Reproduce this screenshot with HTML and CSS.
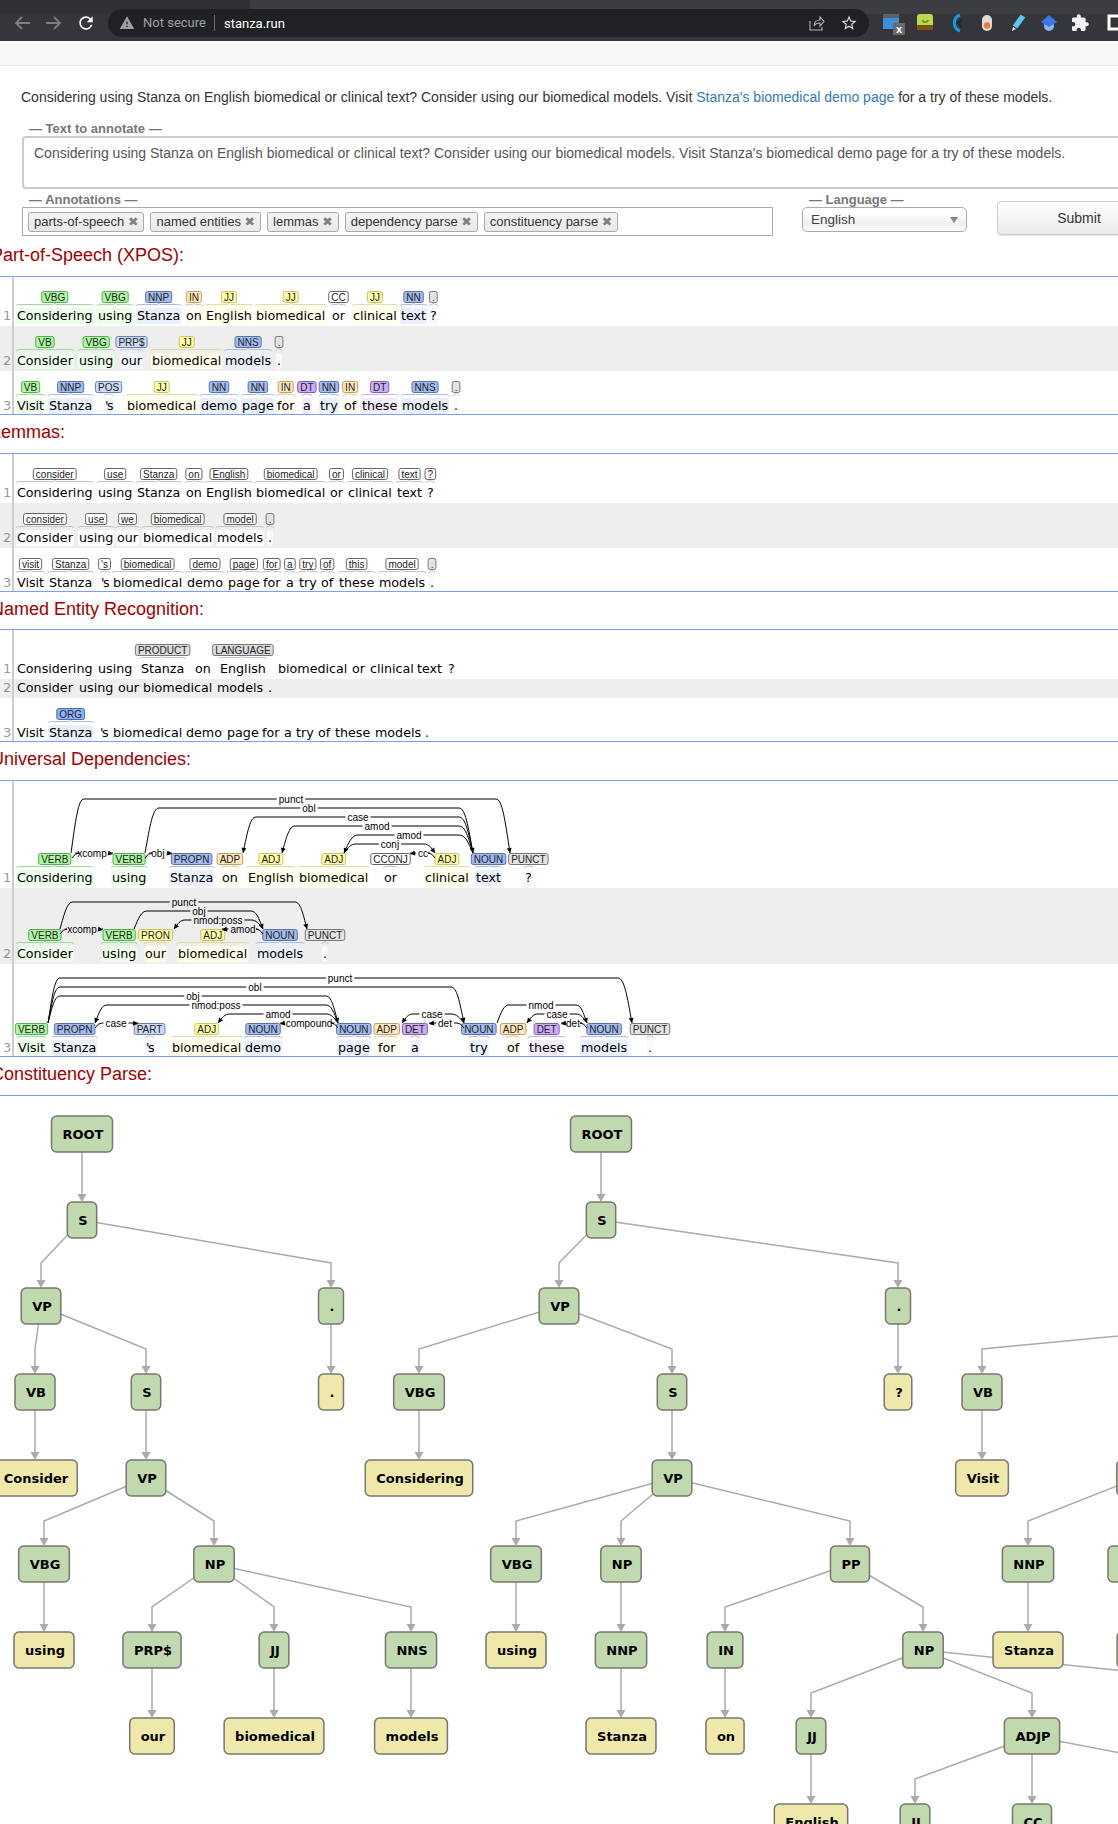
FILE: index.html
```html
<!DOCTYPE html>
<html lang="en">
<head>
	<meta charset="UTF-8">
	<title>Stanza</title>
	<link rel="stylesheet" href="styles.css">
</head>
<body>

<div class="tabstrip"><div class="tab-left"></div></div>
<div class="toolbar">
	<svg class="nav" width="16" height="16" viewBox="0 0 16 16"><path d="M16 8H2M8 2L2 8l6 6" fill="none" stroke="#7c7e81" stroke-width="1.8"/></svg>
	<svg class="nav nav-fwd" width="16" height="16" viewBox="0 0 16 16"><path d="M0 8h14M8 2l6 6-6 6" fill="none" stroke="#7c7e81" stroke-width="1.8"/></svg>
	<svg class="nav nav-reload" width="20" height="20" viewBox="0 0 24 24"><path fill="#fff" d="M17.65 6.35A7.958 7.958 0 0 0 12 4c-4.42 0-7.99 3.58-7.99 8s3.57 8 7.99 8c3.73 0 6.84-2.55 7.73-6h-2.08A5.99 5.99 0 0 1 12 18c-3.31 0-6-2.69-6-6s2.69-6 6-6c1.66 0 3.14.69 4.22 1.78L13 11h7V4l-2.35 2.35z"/></svg>
	<div class="omnibox">
		<svg width="16" height="16" viewBox="0 0 24 24"><path fill="#9aa0a6" d="M1 21h22L12 2 1 21zm12-3h-2v-2h2v2zm0-4h-2v-4h2v4z"/></svg>
		<span class="not-secure">Not secure</span>
		<span class="url">stanza.run</span>
		<svg class="share" width="16" height="16" viewBox="0 0 16 16"><path d="M1 6v9h12v-3M5 11c0-4 3-6 6-6V2l4 4.5-4 4.5V8c-3 0-5 1-6 3z" fill="none" stroke="#b4b7ba" stroke-width="1.1"/></svg>
		<svg class="star" width="18" height="18" viewBox="0 0 24 24"><path fill="#d8dadc" d="M22 9.24l-7.19-.62L12 2 9.19 8.63 2 9.24l5.46 4.73L5.82 21 12 17.27 18.18 21l-1.63-7.03L22 9.24zM12 15.4l-3.76 2.27 1-4.28-3.32-2.88 4.38-.38L12 6.1l1.71 4.04 4.38.38-3.32 2.88 1 4.28L12 15.4z"/></svg>
	</div>
	<div class="extensions">
		<svg width="24" height="24" viewBox="0 0 24 24">
			<rect x="1" y="3" width="16" height="15" fill="#3b8fdd"/><rect x="1" y="3" width="16" height="4" fill="#5b6168"/>
			<rect x="11" y="12" width="12" height="12" rx="1" fill="#6b6b6b"/><text class="badge-x" x="17" y="22">x</text>
		</svg>
		<svg width="24" height="24" viewBox="0 0 24 24">
			<rect x="4" y="3" width="16" height="16" rx="3" fill="#bcd94a"/><path d="M4 14h16v2a3 3 0 0 1-3 3H7a3 3 0 0 1-3-3z" fill="#83500f"/>
			<path d="M9 9c2 0 3 1 3 3 0-2 2-3 4-3-1 2-2 3-4 3-2 0-3-1-3-3z" fill="#4d8f2a"/>
		</svg>
		<svg width="24" height="24" viewBox="0 0 24 24">
			<path d="M16 4a8.5 8.5 0 0 0 0 16" fill="none" stroke="#0e9be0" stroke-width="3"/><path d="M18 8l-4 4 4 4" fill="none" stroke="#26282b" stroke-width="2"/>
		</svg>
		<svg width="24" height="24" viewBox="0 0 24 24">
			<rect x="7" y="4" width="10" height="16" rx="5" fill="#dcdcdc"/><circle cx="12" cy="14.5" r="3.2" fill="#f07a2e"/>
		</svg>
		<svg width="24" height="24" viewBox="0 0 24 24">
			<path d="M9 16L17 5" stroke="#5cc6ee" stroke-width="5.5" fill="none"/><path d="M7 16l3 2-4 2z" fill="#dfe6ea"/>
		</svg>
		<svg width="24" height="24" viewBox="0 0 24 24">
			<circle cx="12" cy="15" r="5" fill="#8ab4f8"/><path d="M12 4l8 7-8 5-8-5z" fill="#3b78e7"/>
		</svg>
		<svg width="24" height="24" viewBox="-3 -3 30 30"><path fill="#f1f3f4" d="M20.5 11H19V7c0-1.1-.9-2-2-2h-4V3.5C13 2.12 11.88 1 10.5 1S8 2.12 8 3.5V5H4c-1.1 0-1.99.9-1.99 2v3.8H3.5c1.49 0 2.7 1.21 2.7 2.7s-1.21 2.7-2.7 2.7H2V20c0 1.1.9 2 2 2h3.8v-1.5c0-1.49 1.21-2.7 2.7-2.7 1.49 0 2.7 1.21 2.7 2.7V22H17c1.1 0 2-.9 2-2v-4h1.5c1.38 0 2.5-1.12 2.5-2.5S21.88 11 20.5 11z"/></svg>
		<svg width="24" height="24" viewBox="0 0 24 24"><rect x="10" y="5" width="14" height="13" fill="none" stroke="#fff" stroke-width="3"/></svg>
	</div>
</div>
<div class="subheader"></div>

<p class="intro">Considering using Stanza on English biomedical or clinical text? Consider using our biomedical models. Visit <a href="#">Stanza's biomedical demo page</a> for a try of these models.</p>

<form class="annotate-form">
	<div class="legend legend-text">— Text to annotate —</div>
	<div class="textarea">Considering using Stanza on English biomedical or clinical text? Consider using our biomedical models. Visit Stanza's biomedical demo page for a try of these models.</div>
	<div class="form-row">
		<div class="field-annotations">
			<div class="legend">— Annotations —</div>
			<div class="chips">
				<span class="chip">parts-of-speech <b>✖</b></span>
				<span class="chip">named entities <b>✖</b></span>
				<span class="chip">lemmas <b>✖</b></span>
				<span class="chip">dependency parse <b>✖</b></span>
				<span class="chip">constituency parse <b>✖</b></span>
			</div>
		</div>
		<div class="field-language">
			<div class="legend">— Language —</div>
			<div class="select">English<i class="caret"></i></div>
		</div>
		<button class="submit" type="button">Submit</button>
	</div>
</form>

<h2>Part-of-Speech (XPOS):</h2>
<div class="brat" id="pos"></div>
<h2>Lemmas:</h2>
<div class="brat" id="lemmas"></div>
<h2 class="short">Named Entity Recognition:</h2>
<div class="brat" id="ner"></div>
<h2>Universal Dependencies:</h2>
<div class="brat" id="deps"></div>
<h2>Constituency Parse:</h2>
<div class="brat no-bottom"><svg id="trees" class="tree" width="1118" height="728" viewBox="0 1096 1118 728"></svg></div>

<script src="script.js"></script>
</body>
</html>
```

FILE: styles.css
```css
html,
body {
    margin: 0;
    height: 1824px;
    overflow: hidden;
    background: #fff;
    font-family: "Liberation Sans", Arial, sans-serif;
}

/* browser chrome */
.tabstrip {
    height: 14px;
    background: #3c3d41;
}
.tab-left {
    width: 250px;
    height: 14px;
    background: #303134;
}
.toolbar {
    display: flex;
    align-items: center;
    box-sizing: border-box;
    height: 27px;
    padding: 0 0 9px 14px;
    background: #35363a;
}
.nav {
    flex: none;
}
.nav-fwd {
    margin-left: 16px;
}
.nav-reload {
    margin-left: 14px;
}
.omnibox {
    display: flex;
    align-items: center;
    flex: none;
    box-sizing: border-box;
    width: 761px;
    height: 28px;
    margin-left: 12px;
    padding: 0 11px 0 11px;
    border-radius: 14px;
    background: #202124;
    font: 13px Roboto, sans-serif;
}
.not-secure {
    margin-left: 8px;
    padding-right: 8px;
    border-right: 1px solid #6b6e72;
    color: #9aa0a6;
    line-height: 16px;
}
.url {
    margin-left: 9px;
    color: #fff;
}
.share {
    margin-left: auto;
}
.star {
    margin-left: 15px;
}
.extensions {
    display: flex;
    gap: 7px;
    flex: none;
    margin-left: 13px;
}
.badge-x {
    font: bold 11px "Liberation Sans", sans-serif;
    fill: #fff;
    text-anchor: middle;
}
.subheader {
    height: 24px;
    background: #f8f8f8;
    border-bottom: 1px solid #e7e7e7;
}

/* form */
.intro {
    margin: 0;
    padding: 23px 0 0 21px;
    font-size: 14px;
    line-height: 16px;
    color: #333;
    white-space: nowrap;
}
.intro a {
    color: #337ab7;
    text-decoration: none;
}
.annotate-form {
    width: 1170px;
    margin: 17px 0 0 22px;
}
.legend {
    height: 14px;
    padding-left: 7px;
    font-size: 13px;
    font-weight: bold;
    line-height: 14px;
    color: #777;
}
.textarea {
    box-sizing: border-box;
    width: 1140px;
    height: 53px;
    padding: 6px 10px;
    border: 2px solid #ccc;
    border-radius: 4px;
    font-size: 14px;
    line-height: 18px;
    color: #555;
    white-space: nowrap;
}
.form-row {
    display: flex;
    align-items: flex-start;
    height: 45px;
    margin-top: 4px;
}
.field-annotations {
    width: 751px;
}
.chips {
    display: flex;
    gap: 6px;
    box-sizing: border-box;
    height: 29px;
    padding: 4px 5px;
    border: 1px solid #aaa;
}
.chip {
    box-sizing: border-box;
    height: 20px;
    padding: 0 5px;
    border: 1px solid #aaa;
    border-radius: 3px;
    background: linear-gradient(#f4f4f4, #e8e8e8);
    font-size: 13px;
    line-height: 18px;
    color: #333;
    white-space: nowrap;
}
.chip b {
    font: 12.5px/1 "DejaVu Sans", sans-serif;
    color: #808080;
}
.field-language {
    width: 165px;
    margin-left: 29px;
}
.select {
    position: relative;
    box-sizing: border-box;
    height: 25px;
    padding-left: 8px;
    border: 1px solid #aaa;
    border-radius: 5px;
    background: linear-gradient(#fff 20%, #eee 70%, #fff);
    font-size: 13.5px;
    line-height: 24px;
    color: #444;
}
.caret {
    position: absolute;
    top: 9px;
    right: 8px;
    border: 4px solid transparent;
    border-top: 6px solid #888;
    border-bottom: 0;
}
.submit {
    width: 164px;
    height: 34px;
    margin: 8px 0 0 30px;
    border: 1px solid #ccc;
    border-radius: 4px;
    background: linear-gradient(#fff, #ebebeb);
    box-shadow: 0 1px 1px rgba(0, 0, 0, 0.1);
    font: 14px "Liberation Sans", sans-serif;
    color: #333;
}

/* visualisation sections */
h2 {
    box-sizing: border-box;
    height: 38px;
    margin: 0 0 0 -9px;
    font-size: 18px;
    font-weight: normal;
    line-height: 34px;
    color: #a00000;
    white-space: nowrap;
}
h2.short {
    height: 37px;
}
.brat {
    border-top: 1px solid #7e9fee;
    border-bottom: 1px solid #7e9fee;
}
.brat svg {
    display: block;
}
.no-bottom {
    border-bottom: 0;
}
.row-alt {
    background: #eee;
}
.tok {
    font: 12.7px "DejaVu Sans", sans-serif;
    fill: #000;
}
.tok-tight {
    letter-spacing: -1.5px;
}
.num {
    font: 13px "DejaVu Sans", sans-serif;
    fill: #999;
}
.lab {
    font: 10px "Liberation Sans", sans-serif;
    fill: #222;
    text-anchor: middle;
}
.arc-label {
    font: 10px "Liberation Sans", sans-serif;
    fill: #000;
    text-anchor: middle;
}
.arc-line {
    fill: none;
    stroke: #000;
    stroke-width: 1;
}
.node-text {
    font: bold 13px "DejaVu Sans", sans-serif;
    fill: #000;
    text-anchor: middle;
}
.edge {
    fill: none;
    stroke: #aaa;
    stroke-width: 1.5;
}
```

FILE: script.js
```js
const NS = "http://www.w3.org/2000/svg";

const colors = {
    green: ["#adf6a2", "#52b052", "#a0dc98", "#ecfdea"],
    blue: ["#a4bced", "#5672b4", "#aebee4", "#e9effb"],
    yellow: ["#fffda8", "#c8c65c", "#e0de9a", "#fffee9"],
    orange: ["#ffe8be", "#c89c5e", "#e8cb9c", "#fffaef"],
    purple: ["#ccadf6", "#7e5cb8", "#c9b3ea", "#f3ecfd"],
    light: ["#ccdaf6", "#6c83b4", "#bfcbe4", "#f1f5fd"],
    white: ["#ffffff", "#666666", "#c4c4c4", "#ffffff"],
    gray: ["#e3e3e3", "#777777", "#c4c4c4", "#f9f9f9"],
    org: ["#8fb2ff", "#4a6db0", "#aebee4", "#e9effb"],
    ent: ["#dddddd", "#777777", "#c4c4c4", "#fafafa"]
};

const labelGroup = {
    VBG: "green", VB: "green", VERB: "green",
    NNP: "blue", NN: "blue", NNS: "blue", PROPN: "blue", NOUN: "blue",
    JJ: "yellow", ADJ: "yellow", PRON: "yellow",
    "PRP$": "light", POS: "light", PART: "light",
    IN: "orange", ADP: "orange",
    DT: "purple", DET: "purple",
    CC: "white", CCONJ: "white",
    ".": "gray", PUNCT: "gray",
    ORG: "org", PRODUCT: "ent", LANGUAGE: "ent"
};

/* top = y of the row on the page, base = text baseline, toks = [word, x, label] */
const sections = {
    pos: [
        { top: 277, h: 49, base: 320, toks: [["Considering", 17, "VBG"], ["using", 98, "VBG"], ["Stanza", 137, "NNP"], ["on", 186, "IN"], ["English", 206, "JJ"], ["biomedical", 256, "JJ"], ["or", 332, "CC"], ["clinical", 353, "JJ"], ["text", 401, "NN"], ["?", 430, "."]] },
        { top: 326, h: 45, base: 365, toks: [["Consider", 17, "VB"], ["using", 79, "VBG"], ["our", 121, "PRP$"], ["biomedical", 152, "JJ"], ["models", 225, "NNS"], [".", 277, "."]] },
        { top: 371, h: 43, base: 410, toks: [["Visit", 17, "VB"], ["Stanza", 49, "NNP"], ["'s", 105, "POS"], ["biomedical", 127, "JJ"], ["demo", 201, "NN"], ["page", 242, "NN"], ["for", 277, "IN"], ["a", 303, "DT"], ["try", 320, "NN"], ["of", 344, "IN"], ["these", 362, "DT"], ["models", 402, "NNS"], [".", 454, "."]] }
    ],
    lemmas: [
        { top: 454, h: 49, base: 497, toks: [["Considering", 17, "consider"], ["using", 98, "use"], ["Stanza", 137, "Stanza"], ["on", 186, "on"], ["English", 206, "English"], ["biomedical", 256, "biomedical"], ["or", 330, "or"], ["clinical", 348, "clinical"], ["text", 397, "text"], ["?", 427, "?"]] },
        { top: 503, h: 45, base: 542, toks: [["Consider", 17, "consider"], ["using", 79, "use"], ["our", 117, "we"], ["biomedical", 143, "biomedical"], ["models", 217, "model"], [".", 268, "."]] },
        { top: 548, h: 43, base: 587, toks: [["Visit", 17, "visit"], ["Stanza", 49, "Stanza"], ["'s", 101, "'s"], ["biomedical", 113, "biomedical"], ["demo", 187, "demo"], ["page", 228, "page"], ["for", 263, "for"], ["a", 286, "a"], ["try", 299, "try"], ["of", 321, "of"], ["these", 339, "this"], ["models", 379, "model"], [".", 430, "."]] }
    ],
    ner: [
        { top: 630, h: 49, base: 673, toks: [["Considering", 17], ["using", 98], ["Stanza", 141, "PRODUCT"], ["on", 195], ["English", 220, "LANGUAGE"], ["biomedical", 278], ["or", 352], ["clinical", 370], ["text", 417], ["?", 448]] },
        { top: 679, h: 19, base: 692, toks: [["Consider", 17], ["using", 79], ["our", 118], ["biomedical", 143], ["models", 217], [".", 268]] },
        { top: 698, h: 43, base: 737, toks: [["Visit", 17], ["Stanza", 49, "ORG"], ["'s", 100], ["biomedical", 113], ["demo", 186], ["page", 227], ["for", 262], ["a", 284], ["try", 296], ["of", 318], ["these", 335], ["models", 375], [".", 425]] }
    ],
    deps: [
        {
            top: 781, h: 107, base: 882,
            toks: [["Considering", 17, "VERB"], ["using", 112, "VERB"], ["Stanza", 170, "PROPN"], ["on", 222, "ADP"], ["English", 248, "ADJ"], ["biomedical", 299, "ADJ"], ["or", 384, "CCONJ"], ["clinical", 425, "ADJ"], ["text", 476, "NOUN"], ["?", 525, "PUNCT"]],
            /* from x, bend x, bend x, to x, level y, label, label x, arrow side */
            arcs: [
                [71, 84, 496, 510, 799, "punct", 291, "r"],
                [145, 159, 459, 473, 808, "obl", 309, "r"],
                [243, 256, 459, 473, 817, "case", 358, "l"],
                [282, 295, 459, 473, 826, "amod", 377, "l"],
                [344, 358, 459, 473, 835, "amod", 409, "l"],
                [344, 356, 424, 435, 844, "conj", 390, "r"],
                [72, 0, 0, 113, 853, "xcomp", 92, "r"],
                [145, 0, 0, 172, 853, "obj", 158, "r"],
                [410, 0, 0, 435, 853, "cc", 423, "l"]
            ]
        },
        {
            top: 888, h: 76, base: 958,
            toks: [["Consider", 17, "VERB"], ["using", 102, "VERB"], ["our", 145, "PRON"], ["biomedical", 178, "ADJ"], ["models", 257, "NOUN"], [".", 323, "PUNCT"]],
            arcs: [
                [60, 73, 295, 307, 902, "punct", 184, "r"],
                [134, 147, 251, 263, 911, "obj", 199, "r"],
                [174, 185, 251, 263, 920, "nmod:poss", 218, "l"],
                [222, 0, 0, 263, 929, "amod", 243, "l"],
                [60, 0, 0, 103, 929, "xcomp", 82, "r"]
            ]
        },
        {
            top: 964, h: 92, base: 1052,
            toks: [["Visit", 18, "VERB"], ["Stanza", 53, "PROPN"], ["'s", 146, "PART"], ["biomedical", 172, "ADJ"], ["demo", 245, "NOUN"], ["page", 338, "NOUN"], ["for", 378, "ADP"], ["a", 411, "DET"], ["try", 470, "NOUN"], ["of", 507, "ADP"], ["these", 529, "DET"], ["models", 581, "NOUN"], [".", 648, "PUNCT"]],
            arcs: [
                [48, 60, 618, 632, 978, "punct", 340, "r"],
                [48, 60, 451, 464, 987, "obl", 255, "r"],
                [48, 60, 326, 338, 996, "obj", 193, "r"],
                [95, 107, 326, 338, 1005, "nmod:poss", 216, "l"],
                [218, 230, 326, 338, 1014, "amod", 278, "l"],
                [402, 413, 451, 464, 1014, "case", 432, "l"],
                [497, 509, 576, 587, 1005, "nmod", 541, "r"],
                [527, 538, 576, 587, 1014, "case", 557, "l"],
                [280, 0, 0, 338, 1023, "compound", 309, "l"],
                [95, 0, 0, 138, 1023, "case", 116, "r"],
                [429, 0, 0, 464, 1023, "det", 445, "l"],
                [561, 0, 0, 587, 1023, "det", 573, "l"]
            ]
        }
    ]
};

/* [label, center x, ...children]; no children means a word */
const trees = [
    ["ROOT", 82, ["S", 82,
        ["VP", 41,
            ["VB", 35, ["Consider", 35]],
            ["S", 146, ["VP", 146,
                ["VBG", 44, ["using", 44]],
                ["NP", 214,
                    ["PRP$", 152, ["our", 152]],
                    ["JJ", 274, ["biomedical", 274]],
                    ["NNS", 411, ["models", 411]]
                ]
            ]]
        ],
        [".", 331, [".", 331]]
    ]],
    ["ROOT", 601, ["S", 601,
        ["VP", 559,
            ["VBG", 419, ["Considering", 419]],
            ["S", 672, ["VP", 672,
                ["VBG", 516, ["using", 516]],
                ["NP", 621, ["NNP", 621, ["Stanza", 621]]],
                ["PP", 850,
                    ["IN", 725, ["on", 725]],
                    ["NP", 923,
                        ["JJ", 811, ["English", 811]],
                        ["ADJP", 1032,
                            ["JJ", 915, ["biomedical", 915]],
                            ["CC", 1032, ["or", 1032]],
                            ["JJ", 1255, ["clinical", 1255]]
                        ],
                        ["NN", 1336, ["text", 1336]]
                    ]
                ]
            ]]
        ],
        [".", 898, ["?", 898]]
    ]]
];

/* third sentence starts past the right edge, only its left part shows */
const partialTree = ["VP", 1431,
    ["VB", 982, ["Visit", 982]],
    ["NP", 1700, ["NP", 1137,
        ["NNP", 1028, ["Stanza", 1028]],
        ["POS", 1133, ["'s", 1133]]
    ]]
];

function el(parent, tag, attrs, str) {
    const node = document.createElementNS(NS, tag);
    for (const key in attrs) node.setAttribute(key, attrs[key]);
    if (str !== undefined) node.textContent = str;
    parent.appendChild(node);
    return node;
}

function drawToken(svg, tok, base) {
    const [word, x, label] = tok;
    const group = colors[labelGroup[label] || "white"];
    const hl = el(svg, "rect", { rx: 3 });
    const t = el(svg, "text", { class: word === "'s" ? "tok tok-tight" : "tok", x: x, y: base }, word);
    const w = t.getComputedTextLength();
    if (!label) {
        svg.removeChild(hl);
        return;
    }
    hl.setAttribute("x", x - 1);
    hl.setAttribute("y", base - 12);
    hl.setAttribute("width", w + 2);
    hl.setAttribute("height", 16);
    hl.setAttribute("fill", group[3]);

    const cx = x + w / 2;
    const x0 = x - 1, x1 = x + w + 1, line = base - 15.5, foot = base - 14;
    const r = Math.min(3, w / 4);
    el(svg, "path", {
        fill: "none", stroke: group[2],
        d: `M${x0} ${foot}Q${x0} ${line} ${x0 + r} ${line}L${cx - 1.5} ${line}Q${cx} ${line} ${cx} ${base - 18}Q${cx} ${line} ${cx + 1.5} ${line}L${x1 - r} ${line}Q${x1} ${line} ${x1} ${foot}`
    });
    const box = el(svg, "rect", { y: base - 28.5, height: 11, rx: 2, fill: group[0], stroke: group[1] });
    const lab = el(svg, "text", { class: "lab", x: cx, y: base - 19.5 }, label);
    const lw = Math.max(lab.getComputedTextLength() + 5, 7);
    box.setAttribute("x", cx - lw / 2);
    box.setAttribute("width", lw);
}

function arrowHead(svg, tipX, tipY, fromX, fromY) {
    const len = Math.hypot(tipX - fromX, tipY - fromY);
    const dx = (tipX - fromX) / len, dy = (tipY - fromY) / len;
    const bx = tipX - dx * 5, by = tipY - dy * 5;
    el(svg, "polygon", {
        fill: "#000",
        points: `${tipX},${tipY} ${bx - dy * 2.5},${by + dx * 2.5} ${bx + dy * 2.5},${by - dx * 2.5}`
    });
}

function drawArc(svg, arc, boxTop) {
    const [x1, x2, x3, x4, y, label, lx, side] = arc;
    const t = el(svg, "text", { class: "arc-label", x: lx, y: y + 3.5 }, label);
    const half = t.getComputedTextLength() / 2 + 2;
    let d;
    if (x2 === 0) {
        /* short arc that runs along the top of the boxes */
        if (side === "r") {
            d = `M${x1} ${y + 5}Q${x1 + 3} ${y} ${x1 + 7} ${y}L${lx - half} ${y}M${lx + half} ${y}L${x4} ${y}`;
            arrowHead(svg, x4, y + 1, x4 - 5, y);
        } else {
            d = `M${x1} ${y}L${lx - half} ${y}M${lx + half} ${y}L${x4 - 7} ${y}Q${x4 - 3} ${y} ${x4} ${y + 5}`;
            arrowHead(svg, x1, y + 1, x1 + 5, y);
        }
    } else {
        const rise = boxTop - y;
        const w1 = x2 - x1, w2 = x4 - x3;
        const c1x = x1 + w1 * 0.35, c2x = x4 - w2 * 0.35, cy = boxTop - rise * 0.6;
        d = `M${x1} ${boxTop}C${c1x} ${cy} ${x1 + w1 * 0.55} ${y} ${x2} ${y}L${lx - half} ${y}M${lx + half} ${y}L${x3} ${y}C${x4 - w2 * 0.55} ${y} ${c2x} ${cy} ${x4} ${boxTop}`;
        if (side === "r") arrowHead(svg, x4, boxTop, c2x, cy);
        else arrowHead(svg, x1, boxTop, c1x, cy);
    }
    el(svg, "path", { class: "arc-line", d: d });
}

function drawSections() {
    for (const id in sections) {
        const box = document.getElementById(id);
        sections[id].forEach(function(row, i) {
            const svg = el(box, "svg", {
                width: 1118, height: row.h,
                viewBox: `0 ${row.top} 1118 ${row.h}`,
                class: i === 1 ? "row-alt" : ""
            });
            el(svg, "rect", { x: 12, y: row.top, width: 2, height: row.h, fill: "#ccc" });
            el(svg, "text", { class: "num", x: 3, y: row.base }, i + 1);
            row.toks.forEach(function(tok) { drawToken(svg, tok, row.base); });
            if (row.arcs) {
                const boxTop = row.base - 29;
                row.arcs.forEach(function(arc) { drawArc(svg, arc, boxTop); });
            }
        });
    }
}

const FIRST_TOP = 1116, LEVEL = 86, NODE_H = 36;
const edgeLayer = el(document.getElementById("trees"), "g", {});
const nodeLayer = el(document.getElementById("trees"), "g", {});

function drawTree(node, depth) {
    const [label, x, ...kids] = node;
    const top = FIRST_TOP + depth * LEVEL;
    if (top > 1824) return;

    kids.forEach(function(kid) {
        const kx = kid[1], kt = top + LEVEL;
        if (kt <= 1824) {
            const d = kx === x
                ? `M${x} ${top + NODE_H / 2}L${kx} ${kt - 7}`
                : `M${x} ${top + NODE_H / 2}L${kx} ${kt - 25}L${kx} ${kt - 7}`;
            el(edgeLayer, "path", { class: "edge", d: d });
            el(edgeLayer, "polygon", { fill: "#aaa", points: `${kx},${kt} ${kx - 4.5},${kt - 8} ${kx + 4.5},${kt - 8}` });
        }
        drawTree(kid, depth + 1);
    });

    /* nodes past the right edge only matter for their edges */
    if (x > 1200) return;
    const rect = el(nodeLayer, "rect", {
        y: top, height: NODE_H, rx: 5,
        fill: kids.length ? "#c1d9ae" : "#eee8aa",
        stroke: "#77776d", "stroke-width": 1.5
    });
    const t = el(nodeLayer, "text", { class: "node-text", x: x + 1, y: top + 23 }, label);
    const w = t.getComputedTextLength() + 20;
    rect.setAttribute("x", x - w / 2);
    rect.setAttribute("width", w);
}

drawSections();
trees.forEach(function(tree) { drawTree(tree, 0); });
drawTree(partialTree, 2);
```
